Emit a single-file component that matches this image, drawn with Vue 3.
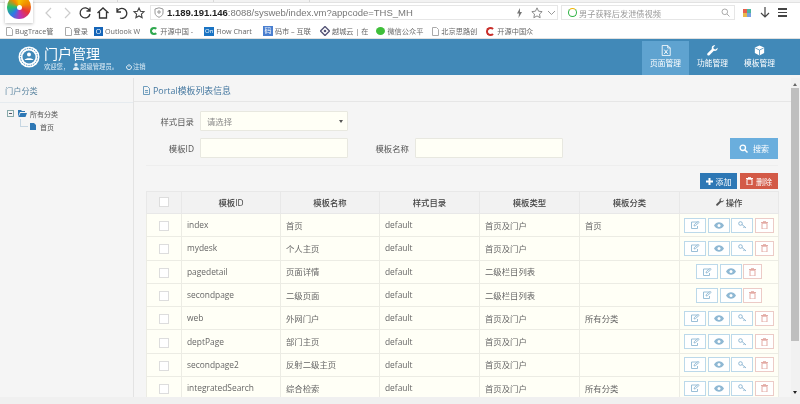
<script setup>
const bookmarks = [
  { label: 'BugTrace管', icon: 'page', gap: 11 },
  { label: '登录', icon: 'page', gap: 6 },
  { label: 'Outlook W', icon: 'outlook', gap: 10 },
  { label: '开源中国 -', icon: 'c-green', gap: 11 },
  { label: 'Flow Chart', icon: 'on', gap: 11 },
  { label: '码市 – 互联', icon: 'ma', gap: 9 },
  { label: '越城云 | 在', icon: 'yue', gap: 8 },
  { label: '微信公众平', icon: 'wx', gap: 9 },
  { label: '北京思路创', icon: 'page', gap: 9 },
  { label: '开源中国众', icon: 'c-red', gap: 0 }
]
const navs = [
  { label: '页面管理', icon: 'excel', active: true },
  { label: '功能管理', icon: 'wrench' },
  { label: '模板管理', icon: 'cube' }
]
const rows = [
  { id: 'index', name: '首页', type: '首页及门户', cat: '首页', key: true },
  { id: 'mydesk', name: '个人主页', type: '首页及门户', cat: '', key: true },
  { id: 'pagedetail', name: '页面详情', type: '二级栏目列表', cat: '', key: false },
  { id: 'secondpage', name: '二级页面', type: '二级栏目列表', cat: '', key: false },
  { id: 'web', name: '外网门户', type: '首页及门户', cat: '所有分类', key: true },
  { id: 'deptPage', name: '部门主页', type: '首页及门户', cat: '', key: true },
  { id: 'secondpage2', name: '反射二级主页', type: '首页及门户', cat: '', key: true },
  { id: 'integratedSearch', name: '综合检索', type: '首页及门户', cat: '所有分类', key: true }
]
</script>

<template>
  <div class="screen">
    <div class="tabstrip"><i></i><i></i><i></i></div>

    <div class="toolbar">
      <div class="swirl"><span></span></div>
      <svg class="tb" width="14" height="14" viewBox="0 0 14 14"><path d="M9 2 4 7l5 5" fill="none" stroke="#ccc" stroke-width="1.2"/></svg>
      <svg class="tb" width="14" height="14" viewBox="0 0 14 14"><path d="m5 2 5 5-5 5" fill="none" stroke="#ccc" stroke-width="1.2"/></svg>
      <svg class="tb" width="14" height="14" viewBox="0 0 14 14"><path d="M11.5 4.5A5 5 0 1 0 12 8M12 1.500v3.500H8.500" fill="none" stroke="#333" stroke-width="1.300"/></svg>
      <svg class="tb" width="14" height="14" viewBox="0 0 14 14"><path d="M1.500 7 7 2l5.500 5M3.500 6v6h7V6" fill="none" stroke="#333" stroke-width="1.300"/></svg>
      <svg class="tb" width="14" height="14" viewBox="0 0 14 14"><path d="M3 2v4h4M3 6a5 5 0 1 1 3 6" fill="none" stroke="#333" stroke-width="1.300"/></svg>
      <svg class="tb" width="14" height="14" viewBox="0 0 14 14"><path d="m7 2 1.500 3.300 3.500.4-2.600 2.400.7 3.500L7 9.900 3.900 11.600l.7-3.500L2 5.700l3.500-.4z" fill="none" stroke="#444" stroke-width="1.100"/></svg>

      <div class="urlbar">
        <svg width="10" height="11" viewBox="0 0 10 11"><path d="M5 .8 9 2v4c0 2-2 3.500-4 4.300C3 9.500 1 8 1 6V2z" fill="none" stroke="#999"/><path d="M3 5h4M5 3v4" stroke="#999"/></svg>
        <span class="url"><b>1.189.191.146</b>:8088/sysweb/index.vm?appcode=THS_MH</span>
        <svg class="bolt" width="7" height="10" viewBox="0 0 7 10"><path d="M4 0 1 5.500h2L2.500 10 6 4H4z" fill="#777"/></svg>
        <svg width="12" height="12" viewBox="0 0 14 14"><path d="m7 1 1.800 3.900 4.200.5-3.100 2.900.8 4.200L7 10.400 3.300 12.500l.8-4.200L1 5.400l4.200-.5z" fill="none" stroke="#777"/></svg>
        <svg class="chev" width="9" height="6" viewBox="0 0 9 6"><path d="m1 1 3.500 3.500L8 1" fill="none" stroke="#999"/></svg>
      </div>

      <div class="searchbar">
        <span class="q"></span>
        <span class="hint">男子获释后发泄债视频</span>
        <svg width="9" height="9" viewBox="0 0 9 9"><circle cx="3.800" cy="3.800" r="2.800" fill="none" stroke="#aaa"/><path d="m6 6 2.500 2.500" stroke="#aaa"/></svg>
      </div>

      <div class="apps"><i style="background:#e8604c"></i><i style="background:#4cb6a0"></i><i style="background:#e8b84c"></i><i style="background:#7a9fe0"></i></div>
      <svg class="dl" width="10" height="12" viewBox="0 0 10 12"><path d="M5 0v10M1 6l4 4 4-4" fill="none" stroke="#444" stroke-width="1.200"/></svg>
      <div class="burger"><i></i><i></i><i></i></div>
    </div>

    <div class="bookmarks">
      <div v-for="b in bookmarks" :key="b.label" class="bm" :style="{ marginRight: b.gap + 'px' }">
        <svg v-if="b.icon === 'page'" class="bmi" width="7" height="9" viewBox="0 0 7 9"><path d="M.5.500h4l2 2v6h-6z" fill="#fff" stroke="#aaa"/></svg>
        <span v-else-if="b.icon === 'outlook'" class="bmi ol">O</span>
        <span v-else-if="b.icon === 'c-green'" class="bmi cc green"></span>
        <span v-else-if="b.icon === 'c-red'" class="bmi cc red"></span>
        <span v-else-if="b.icon === 'on'" class="bmi on">On</span>
        <span v-else-if="b.icon === 'ma'" class="bmi ma">码</span>
        <svg v-else-if="b.icon === 'yue'" class="bmi" width="10" height="10" viewBox="0 0 10 10"><path d="M5 .5 9.500 5 5 9.500.5 5z" fill="none" stroke="#557" stroke-width="1.400"/><circle cx="5" cy="5" r="1.300" fill="#557"/></svg>
        <span v-else class="bmi wx"></span>
        <span>{{ b.label }}</span>
      </div>
    </div>

    <header class="appbar">
      <div class="brand">
        <svg width="22" height="22" viewBox="0 0 22 22">
          <circle cx="11" cy="11" r="10.500" fill="#fff"/>
          <circle cx="11" cy="11" r="8.500" fill="none" stroke="#4189b8" stroke-dasharray="1.500 1"/>
          <circle cx="11" cy="11" r="6.500" fill="#4189b8"/>
          <circle cx="11" cy="8.500" r="2" fill="#fff"/>
          <path d="M6.500 14c1-2.500 8-2.500 9 0z" fill="#fff"/>
        </svg>
        <div class="brand-text">
          <div class="brand-title">门户管理</div>
          <div class="brand-sub">
            <span>欢迎您，</span>
            <svg width="6" height="7" viewBox="0 0 6 7"><circle cx="3" cy="1.800" r="1.700" fill="#dcebf5"/><path d="M0 7c0-4 6-4 6 0z" fill="#dcebf5"/></svg>
            <span>超级管理员。</span>
            <svg class="power" width="6" height="6" viewBox="0 0 7 7"><path d="M2 1.500a2.800 2.800 0 1 0 3 0M3.500 0v3.200" fill="none" stroke="#fff"/></svg>
            <span>注销</span>
          </div>
        </div>
      </div>
      <nav class="nav">
        <div v-for="n in navs" :key="n.label" class="nav-item" :class="{ active: n.active }">
          <svg v-if="n.icon === 'excel'" width="10" height="11" viewBox="0 0 11 13"><path d="M1 .500h6.500l3 3V12.500H1zM7.500.500v3h3" fill="none" stroke="#fff"/><path d="m3.500 5.500 4 5M7.500 5.500l-4 5" stroke="#fff" stroke-width="1.100"/></svg>
          <svg v-else-if="n.icon === 'wrench'" width="11" height="11" viewBox="0 0 13 13"><path d="M12.500 3.200 10.200 5.300 8 4.800l-.5-2.200L9.700.500C7.800-.2 5.500 1.200 5.600 3.700c0 .4.100.7.200 1L.700 9.800c-.7.700-.6 1.600 0 2.200.6.600 1.500.7 2.200 0l5.200-5.100c2.600.8 5-1.600 4.400-3.900z" fill="#fff"/></svg>
          <svg v-else width="11" height="11" viewBox="0 0 12 13"><path d="M6 .500 11.500 3v6.500L6 12.500.5 9.500V3z" fill="#fff"/><path d="M1 3.500 6 6l5-2.500M6 6v6.500" fill="none" stroke="#4189b8" stroke-width=".9"/></svg>
          <span>{{ n.label }}</span>
        </div>
      </nav>
    </header>

    <div class="body">
      <aside class="side">
        <div class="side-title">门户分类</div>
        <div class="tree">
          <div class="tree-row">
            <span class="minus"></span>
            <svg class="folder" width="9" height="7" viewBox="0 0 9 7"><path d="M0 7V0h3l1 1h3v1H2zM2.500 3H9L7.500 7H.5z" fill="#2e78b5"/></svg>
            <span>所有分类</span>
          </div>
          <div class="tree-row child">
            <span class="elbow"></span>
            <svg width="6" height="7" viewBox="0 0 6 7"><path d="M0 0h4l2 2v5H0z" fill="#2e78b5"/></svg>
            <span class="leaf">首页</span>
          </div>
        </div>
      </aside>

      <main class="main">
        <div class="main-title">
          <svg width="7" height="9" viewBox="0 0 7 9"><path d="M.5.500h4l2 2v6h-6zM2 4.500h3M2 6.300h3" fill="none" stroke="#4d86ad" stroke-width=".8"/></svg>
          <span>Portal模板列表信息</span>
        </div>
        <div class="content">
          <div class="form-row">
            <label class="lab">样式目录</label>
            <div class="field select">请选择<i></i></div>
          </div>
          <div class="form-row second">
            <label class="lab">模板ID</label>
            <div class="field"></div>
            <label class="lab lab2">模板名称</label>
            <div class="field"></div>
            <button class="btn search">
              <svg width="9" height="9" viewBox="0 0 9 9"><circle cx="3.800" cy="3.800" r="2.700" fill="none" stroke="#fff" stroke-width="1.300"/><path d="m6 6 2.500 2.500" stroke="#fff" stroke-width="1.400"/></svg>搜索
            </button>
          </div>
          <div class="actions">
            <button class="btn add">
              <svg width="7" height="7" viewBox="0 0 7 7"><path d="M3.500 0v7M0 3.500h7" stroke="#fff" stroke-width="2"/></svg>添加
            </button>
            <button class="btn del">
              <svg width="7" height="8" viewBox="0 0 7 8"><path d="M0 1.500h7M2.500 1V.3h2V1M1 2.200h5V8H1z" fill="none" stroke="#fff"/></svg>删除
            </button>
          </div>
          <table class="grid">
            <colgroup>
              <col style="width:35px"><col style="width:99px"><col style="width:99px"><col style="width:100px"><col style="width:100px"><col style="width:100px"><col style="width:99px">
            </colgroup>
            <thead>
              <tr>
                <th><span class="check"></span></th>
                <th>模板ID</th>
                <th>模板名称</th>
                <th>样式目录</th>
                <th>模板类型</th>
                <th>模板分类</th>
                <th>
                  <svg width="8" height="8" viewBox="0 0 13 13"><path d="M12.500 3.200 10.200 5.300 8 4.800l-.5-2.200L9.700.500C7.800-.2 5.500 1.200 5.600 3.700c0 .4.100.7.200 1L.700 9.800c-.7.700-.6 1.600 0 2.200.6.600 1.500.7 2.200 0l5.200-5.100c2.600.8 5-1.600 4.400-3.900z" fill="#555"/></svg>
                  操作
                </th>
              </tr>
            </thead>
            <tbody>
              <tr v-for="r in rows" :key="r.id">
                <td class="c"><span class="check"></span></td>
                <td>{{ r.id }}</td>
                <td>{{ r.name }}</td>
                <td>default</td>
                <td>{{ r.type }}</td>
                <td>{{ r.cat }}</td>
                <td class="c">
                  <div class="ops">
                    <span class="op">
                      <svg width="9" height="8" viewBox="0 0 9 8"><path d="M6.500 1H.5v6.500h6V5M3 5l.4-1.500L7.200.3l1 1L4.500 4.600z" fill="none" stroke="#8fb8d3" stroke-width=".9"/></svg>
                    </span>
                    <span class="op">
                      <svg width="10" height="7" viewBox="0 0 10 7"><path d="M0 3.500C2.500-.8 7.500-.8 10 3.500 7.500 7.800 2.500 7.800 0 3.500z" fill="#8fb8d3"/><circle cx="5" cy="3.500" r="1.500" fill="#fff"/></svg>
                    </span>
                    <span v-if="r.key" class="op">
                      <svg width="9" height="8" viewBox="0 0 9 8"><circle cx="2.500" cy="2.500" r="1.800" fill="none" stroke="#8fb8d3"/><path d="m4 3.500 4 3.500M6.500 5.700 5.500 7" stroke="#8fb8d3"/></svg>
                    </span>
                    <span class="op danger">
                      <svg width="7" height="8" viewBox="0 0 7 8"><path d="M0 1.500h7M2.500 1V.3h2V1M1 2.200h5V8H1z" fill="none" stroke="#e3aaa4"/></svg>
                    </span>
                  </div>
                </td>
              </tr>
            </tbody>
          </table>
        </div>
      </main>

      <div class="scrollbar">
        <i class="up"></i>
        <div class="thumb"></div>
        <i class="down"></i>
      </div>
    </div>
    <div class="foot"></div>
  </div>
</template>

<style scoped>
.screen {
  width: 800px;
  height: 404px;
  overflow: hidden;
  display: flex;
  flex-direction: column;
  background: #f5f5f5;
  color: #666;
  font-family: "Open Sans", "Noto Sans CJK SC", sans-serif;
  font-size: 8.4px;
  filter: blur(0.3px);
}

.tabstrip {
  height: 3px;
  flex: none;
  background: #f2f2f2;
  display: flex;
  padding-left: 22px;
  border-bottom: 1px solid #e2e2e2;
  box-sizing: border-box;
}

.tabstrip i {
  width: 95px;
  border-right: 1px solid #d8d8d8;
}

.toolbar {
  height: 21px;
  flex: none;
  display: flex;
  align-items: center;
  background: #fff;
  position: relative;
  padding: 0 0 2px 42px;
  box-sizing: border-box;
}

.swirl {
  position: absolute;
  left: 5px;
  top: -3px;
  width: 28px;
  height: 23px;
  background: #fff;
  box-shadow: 0 1px 3px rgba(0, 0, 0, 0.25);
  overflow: hidden;
}

.swirl span {
  position: absolute;
  left: 2px;
  top: -5px;
  width: 24px;
  height: 24px;
  border-radius: 50%;
  background: conic-gradient(#f7c600, #f08a00 70deg, #e8353a 120deg, #c030b0 170deg, #2a7ae8 220deg, #25c06a 270deg, #f08a00 320deg, #f7c600);
}

.swirl span::after {
  content: "";
  position: absolute;
  left: 9.500px;
  top: 9.500px;
  width: 5px;
  height: 5px;
  border-radius: 50%;
  background: #fff;
}

.tb {
  margin-right: 4px;
  flex: none;
}

.urlbar {
  width: 408px;
  height: 15px;
  border: 1px solid #e6e6e6;
  box-sizing: border-box;
  display: flex;
  align-items: center;
  padding: 0 1px 0 3px;
  flex: none;
}

.url {
  margin-left: 3px;
  color: #777;
  font-size: 9.500px;
  font-family: "Liberation Sans", sans-serif;
  white-space: nowrap;
  flex: 1;
}

.url b {
  color: #222;
}

.bolt {
  margin-right: 8px;
}

.chev {
  margin-left: 4px;
}

.searchbar {
  width: 174px;
  height: 15px;
  margin-left: 3px;
  border: 1px solid #e6e6e6;
  box-sizing: border-box;
  display: flex;
  align-items: center;
  padding: 0 4px 0 6px;
  flex: none;
}

.q {
  width: 9px;
  height: 9px;
  border: 1.500px solid #2fb344;
  border-top-color: #f0b400;
  border-radius: 50%;
  box-sizing: border-box;
}

.hint {
  flex: 1;
  margin-left: 2px;
  color: #999;
  font-size: 8.2px;
}

.apps {
  width: 8px;
  height: 8px;
  margin-left: 8px;
  display: grid;
  grid-template-columns: 1fr 1fr;
  flex: none;
}

.dl {
  margin-left: 9px;
  flex: none;
}

.burger {
  margin-left: 8px;
  width: 9px;
  display: flex;
  flex-direction: column;
  gap: 2px;
}

.burger i {
  height: 1.500px;
  background: #444;
}

.bookmarks {
  height: 14px;
  flex: none;
  background: #fff;
  display: flex;
  align-items: center;
  padding-left: 6px;
  white-space: nowrap;
  font-size: 7.200px;
  color: #666;
  border-bottom: 1px solid #e0e0e0;
  box-sizing: content-box;
}

.bm {
  display: flex;
  align-items: center;
  gap: 2px;
}

.bmi {
  flex: none;
}

.ol {
  width: 9px;
  height: 9px;
  background: #1565b8;
  color: #fff;
  font-size: 7px;
  line-height: 9px;
  text-align: center;
}

.cc {
  width: 8px;
  height: 8px;
  border-radius: 50%;
  border: 2.500px solid;
  border-right-color: transparent;
  box-sizing: border-box;
}

.green {
  border-color: #2fa84f;
  border-right-color: transparent;
}

.red {
  border-color: #c9302c;
  border-right-color: transparent;
  width: 9px;
  height: 9px;
}

.on {
  width: 10px;
  height: 9px;
  background: #1a74c4;
  color: #fff;
  font-size: 6px;
  line-height: 9px;
  text-align: center;
}

.ma {
  width: 10px;
  height: 10px;
  background: #4a7fd0;
  color: #fff;
  font-size: 7px;
  line-height: 10px;
  text-align: center;
}

.wx {
  width: 9px;
  height: 8px;
  border-radius: 50%;
  background: #3fbf3a;
}

.appbar {
  height: 36px;
  flex: none;
  background: #4189b8;
  display: flex;
  justify-content: space-between;
  color: #fff;
}

.brand {
  display: flex;
  align-items: center;
  padding-left: 18px;
  gap: 4px;
}

.brand-text {
  display: flex;
  flex-direction: column;
}

.brand-title {
  font-size: 14px;
  line-height: 17px;
  margin-top: 2px;
}

.brand-sub {
  display: flex;
  align-items: center;
  font-size: 6.300px;
  line-height: 10px;
  color: #dcebf5;
  white-space: nowrap;
}

.brand-sub svg:first-of-type {
  margin: 0 1px 0 4px;
}

.brand-sub .power {
  margin: 0 1px 0 8px;
}

.nav {
  display: flex;
  padding: 2px 17px 0 0;
}

.nav-item {
  width: 47px;
  display: flex;
  flex-direction: column;
  align-items: center;
  padding-top: 4px;
  gap: 2px;
  font-size: 7.700px;
  line-height: 11px;
  box-sizing: border-box;
}

.nav-item.active {
  background: #5fa3d0;
}

.body {
  flex: 1;
  min-height: 0;
  display: flex;
  padding-top: 3px;
}

.side {
  width: 133px;
  flex: none;
  border-right: 1px solid #e3e3e3;
  box-sizing: content-box;
}

.side-title {
  height: 24px;
  line-height: 25px;
  padding-left: 5px;
  color: #5f88a3;
  font-size: 8.200px;
  border-bottom: 1px solid #e6ebef;
}

.tree {
  padding: 4px 0 0 7px;
}

.tree-row {
  display: flex;
  align-items: center;
  height: 13px;
  font-size: 7px;
  color: #555;
}

.minus {
  width: 7px;
  height: 7px;
  border: 1px solid #8aa;
  margin-right: 4px;
  box-sizing: border-box;
  background: linear-gradient(#556, #556) center / 3px 1px no-repeat;
}

.folder {
  margin-right: 3px;
}

.child {
  padding-left: 13px;
}

.elbow {
  width: 8px;
  height: 8px;
  margin-top: -7px;
  margin-right: 2px;
  border-left: 1px solid #c6d6e2;
  border-bottom: 1px solid #c6d6e2;
  box-sizing: border-box;
}

.leaf {
  margin-left: 4px;
}

.main {
  flex: 1;
  min-width: 0;
  overflow: hidden;
}

.main-title {
  height: 23px;
  display: flex;
  align-items: center;
  gap: 3px;
  padding: 1px 0 0 9px;
  color: #4578a0;
  font-size: 8.900px;
  border-bottom: 1px solid #e6e6e6;
  box-sizing: border-box;
  height: 24px;
}

.content {
  padding: 9px 13px 0 12px;
}

.form-row {
  display: flex;
  align-items: center;
  height: 20px;
}

.form-row.second {
  margin-top: 7px;
  padding-bottom: 7px;
  box-sizing: content-box;
  border-bottom: 1px solid #eee;
}

.lab {
  width: 48px;
  text-align: right;
  margin-right: 6px;
  font-size: 8.400px;
  color: #555;
  flex: none;
}

.lab2 {
  width: 61px;
}

.field {
  width: 148px;
  height: 20px;
  background: #fffff6;
  border: 1px solid #e8e8e0;
  box-sizing: border-box;
  flex: none;
  border-radius: 1px;
}

.select {
  position: relative;
  line-height: 19px;
  padding-left: 6px;
  color: #888;
  font-size: 8.400px;
}

.select i {
  position: absolute;
  right: 4px;
  top: 8px;
  border: 2px solid transparent;
  border-top: 3px solid #555;
}

.btn {
  border: 0;
  color: #fff;
  font-family: inherit;
  display: flex;
  align-items: center;
  justify-content: center;
  gap: 3px;
  font-size: 8px;
  padding: 0;
  box-sizing: border-box;
}

.search {
  width: 48px;
  height: 21px;
  margin-left: auto;
  background: #6aaedd;
  gap: 5px;
}

.actions {
  display: flex;
  justify-content: flex-end;
  gap: 3px;
  padding-top: 7px;
  margin-bottom: 2px;
}

.add {
  width: 37px;
  height: 16px;
  background: #2e78b5;
}

.del {
  width: 38px;
  height: 16px;
  background: #d35a47;
}

.grid {
  width: 632px;
  table-layout: fixed;
  border-collapse: collapse;
  background: #fffff6;
}

.grid th {
  height: 22px;
  padding: 0 0 2px;
  background: #f2f2f2;
  border: 1px solid #e8e8e8;
  font-weight: 500;
  font-size: 8.400px;
  color: #444;
  box-sizing: border-box;
}

.grid td {
  height: 23.300px;
  padding: 0 0 1px 5px;
  border: 1px solid #ececE4;
  font-size: 8.400px;
  color: #666;
  white-space: nowrap;
  box-sizing: border-box;
}

.grid td.c {
  padding: 0;
  text-align: center;
}

.check {
  display: inline-block;
  width: 10px;
  height: 10px;
  background: #fff;
  border: 1px solid #ddd;
  box-sizing: border-box;
  vertical-align: middle;
}

.ops {
  display: flex;
  justify-content: center;
  gap: 1.500px;
}

.op {
  width: 22px;
  height: 15px;
  background: #fff;
  border: 1px solid #bcd9ea;
  box-sizing: border-box;
  display: flex;
  align-items: center;
  justify-content: center;
}

.op.danger {
  width: 19px;
  border-color: #eccbc7;
}

.scrollbar {
  width: 9px;
  flex: none;
  background: #f1f1f1;
  position: relative;
}

.thumb {
  position: absolute;
  top: 10px;
  left: 0;
  right: 1px;
  height: 253px;
  background: #bfbfbf;
}

.up,
.down {
  position: absolute;
  left: 2px;
  border: 2.500px solid transparent;
}

.up {
  top: 3px;
  border-bottom: 3px solid #666;
}

.down {
  bottom: 1px;
  border-top: 3px solid #222;
}

.foot {
  height: 7px;
  flex: none;
  background: #f0f0f0;
}
</style>
